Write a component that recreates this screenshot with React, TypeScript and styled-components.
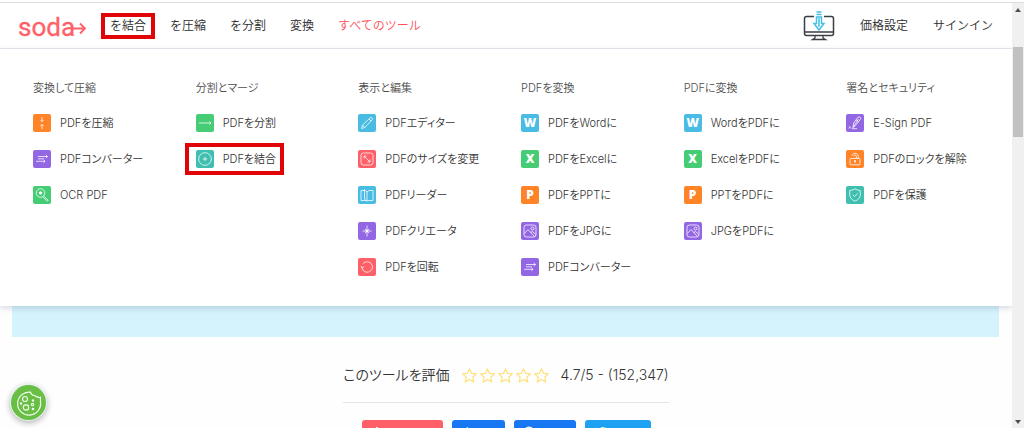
import React from 'react';
import styled, { createGlobalStyle } from 'styled-components';

const GlobalStyle = createGlobalStyle`
  * { box-sizing: border-box; }
  body {
    margin: 0;
    overflow: hidden;
    background: #fefefe;
    color: #333;
    font-family: Inter, "Noto Sans CJK JP", sans-serif;
    font-weight: 350;
  }
  a { color: inherit; text-decoration: none; }
  button { font: inherit; border: 0; padding: 0; cursor: pointer; }
  svg { display: block; }
`;

const Shell = styled.div`
  display: flex;
  height: 100vh;
  margin-top: 2px;
  border-top: 1px solid #dcdddf;
`;

const Page = styled.div`
  flex: 1;
  min-width: 0;
`;

const ScrollTrack = styled.div`
  position: relative;
  z-index: 1;
  display: flex;
  flex-direction: column;
  align-items: center;
  width: 12px;
  height: calc(100vh - 3px);
  padding: 5px 0 4px;
  background: #f0f0f0;
`;

const ScrollThumb = styled.div`
  width: 10px;
  height: 90px;
  margin: 35px 0 auto;
  background: #c1c1c1;
`;

const Header = styled.header`
  display: flex;
  align-items: center;
  justify-content: space-between;
  height: 46px;
  padding: 0 19px 0 18px;
  border-bottom: 1px solid #e6eaf0;
  background: #fff;
`;

const Group = styled.div<{ $gap: number }>`
  display: flex;
  align-items: center;
  gap: ${(p) => p.$gap}px;
`;

const Nav = styled.nav`
  display: flex;
  gap: 24px;
`;

const marker = (y: number, right: number, left: number) => `
  &::after {
    content: "";
    position: absolute;
    inset: -${y}px -${right}px -${y}px -${left}px;
    border: 4px solid #e00408;
  }
`;

const NavLink = styled.a<{ $accent?: boolean; $marked?: boolean }>`
  position: relative;
  font-size: 12px;
  line-height: 18px;
  white-space: nowrap;
  color: ${(p) => (p.$accent ? '#ff5058' : '#2b2b2b')};
  ${(p) => (p.$marked ? marker(4, 9, 9) : '')}
`;

const Menu = styled.section`
  position: relative;
  display: grid;
  grid-template-columns: repeat(6, 1fr);
  padding: 31px 3px 30px 33px;
  background: #fff;
  box-shadow: 0 2px 6px rgba(60, 80, 110, 0.22);
`;

const Heading = styled.h2`
  margin: 0 0 18px;
  font-size: 11px;
  font-weight: 350;
  line-height: 16px;
  color: #4c4c4c;
  font-feature-settings: "palt";
`;

const List = styled.ul`
  display: flex;
  flex-direction: column;
  align-items: flex-start;
  gap: 18px;
  margin: 0;
  padding: 0;
  list-style: none;
`;

const ToolLink = styled.a<{ $marked?: boolean }>`
  position: relative;
  display: flex;
  align-items: center;
  gap: 9px;
  font-size: 11px;
  line-height: 18px;
  white-space: nowrap;
  font-feature-settings: "palt";
  ${(p) => (p.$marked ? marker(7, 8, 11) : '')}
`;

const Tile = styled.span<{ $color: string }>`
  display: flex;
  align-items: center;
  justify-content: center;
  width: 18px;
  height: 18px;
  border-radius: 2px;
  background: ${(p) => p.$color};
  color: #fff;
  font-family: "Open Sans", sans-serif;
  font-size: 12px;
  font-weight: 800;
`;

const Band = styled.div`
  height: 31px;
  margin: 0 13px 0 12px;
  background: #d4f3fd;
`;

const Rating = styled.section`
  display: flex;
  flex-direction: column;
  align-items: center;
  padding-top: 28px;
`;

const RatingRow = styled.div`
  display: flex;
  align-items: center;
  gap: 12px;
  padding-bottom: 17px;
  border-bottom: 1px solid #e4e4e4;
  font-size: 14px;
  line-height: 20px;
  font-feature-settings: "palt";
`;

const StarButton = styled.button`
  background: none;
`;

const ShareRow = styled.div`
  display: flex;
  gap: 9px;
  margin-top: 17px;
`;

const ShareButton = styled.button<{ $color: string; $width: number }>`
  width: ${(p) => p.$width}px;
  height: 24px;
  padding: 5px 9px;
  border-radius: 3px;
  background: ${(p) => p.$color};
`;

const CookieButton = styled.button`
  position: fixed;
  left: 11px;
  bottom: 8px;
  display: flex;
  align-items: center;
  justify-content: center;
  width: 35px;
  height: 35px;
  border-radius: 50%;
  background: #69be45;
  box-shadow: 0 0 0 1px #e6f3f0, 0 2px 6px 1px rgba(0, 0, 0, 0.3);
`;

const glyphs: Record<string, React.ReactNode> = {
  compress: <path d="M9 3v4.500M7.500 6 9 7.600 10.500 6M9 15v-4.500M7.500 12 9 10.400 10.500 12" />,
  convert: <path d="M5 6.500h9.500M12.800 5l1.700 1.500-1.700 1.500M5 8.800h6M3 11.300h9M10.500 9.900l1.600 1.400-1.600 1.400" />,
  ocr: (
    <>
      <circle cx="7.500" cy="7" r="4.300" />
      <circle cx="7.500" cy="7" r="1.300" fill="#fff" />
      <path d="m10.600 10 4.600 4.200-1 1-4.400-4.400" />
    </>
  ),
  split: <path d="M3 9h12M13.500 7.500 15 9l-1.500 1.500" />,
  merge: (
    <>
      <circle cx="9" cy="9" r="6.300" />
      <path d="M9 6.800v4.400M6.800 9h4.400" />
    </>
  ),
  pencil: <path d="m3.500 14.500 1-3.500 7.700-7.200q.9-.8 1.900.1t.1 1.900L6.800 13.500zM11 5l2 2M4.500 11l2.300 2.500" />,
  resize: (
    <>
      <rect x="3" y="3" width="12" height="12" rx="2.500" />
      <path d="m6 6 6 6M6 8.500V6h2.500M12 9.500V12H9.500" />
    </>
  ),
  reader: <path d="M6.500 3.500 9 6v9l-2.500-1.800zM6.500 4.500H3v10h5.500M9 6l2-1.500h4v10h-4L9 15" />,
  creator: (
    <>
      <path d="M9 3.500v11M4.500 9h9M6.800 6.800l4.400 4.400M11.200 6.800l-4.400 4.400" />
      <circle cx="9" cy="9" r="1" fill="#fff" />
    </>
  ),
  rotate: <path d="M4 10a5.300 5.300 0 1 0 1-4.300M3 8l1 2 2-1.200" />,
  image: (
    <>
      <rect x="3" y="3" width="12" height="12" rx="2.500" />
      <circle cx="11.500" cy="6.500" r="1.500" />
      <path d="m3.300 11.500 3.700-4 6.500 7M9.800 10.500l1.800-1 3.200 3" />
    </>
  ),
  sign: <path d="M7 13.500 7.700 9l4-5.500q1.500-1.300 2.600-.2 1 1.200-.3 2.600L9.500 11.500zM7 13.500 12.500 5M10 5.800l2.500 2M2.800 12.500l2 2M4.800 12.500l-2 2M6 14.700h5" />,
  unlock: (
    <>
      <rect x="4" y="8.500" width="10" height="6.300" rx="1" />
      <path d="M6 5.800C6.500 2.200 12 2.500 12.200 6v2.500M7.800 6.200c.4-1.600 2.500-1.500 2.600 0v2.300M9 10.800v2" />
      <circle cx="9" cy="11" r=".6" fill="#fff" />
    </>
  ),
  shield: <path d="M9 2.800q2.500 1.700 5.300 1.700v4.300q-.3 4.300-5.300 6.400-5-2.100-5.300-6.400V4.500Q6.500 4.500 9 2.800zM6.700 8.700l1.800 1.800 3-3" />,
};

const Glyph = ({ name }: { name: string }) =>
  glyphs[name] ? (
    <svg width="18" height="18" viewBox="0 0 18 18" fill="none" stroke="#fff" strokeOpacity="0.85" strokeWidth="0.9" aria-hidden="true">
      {glyphs[name]}
    </svg>
  ) : (
    <>{name}</>
  );

const orange = '#ff8427';
const purple = '#9367e3';
const green = '#46cc74';
const teal = '#40bfb0';
const blue = '#49bce3';
const red = '#ff5f66';

type Tool = [icon: string, color: string, label: string, marked?: boolean];

const columns: { title: string; tools: Tool[] }[] = [
  {
    title: '変換して圧縮',
    tools: [
      ['compress', orange, 'PDFを圧縮'],
      ['convert', purple, 'PDFコンバーター'],
      ['ocr', green, 'OCR PDF'],
    ],
  },
  {
    title: '分割とマージ',
    tools: [
      ['split', green, 'PDFを分割'],
      ['merge', teal, 'PDFを結合', true],
    ],
  },
  {
    title: '表示と編集',
    tools: [
      ['pencil', blue, 'PDFエディター'],
      ['resize', red, 'PDFのサイズを変更'],
      ['reader', blue, 'PDFリーダー'],
      ['creator', purple, 'PDFクリエータ'],
      ['rotate', red, 'PDFを回転'],
    ],
  },
  {
    title: 'PDFを変換',
    tools: [
      ['W', blue, 'PDFをWordに'],
      ['X', green, 'PDFをExcelに'],
      ['P', orange, 'PDFをPPTに'],
      ['image', purple, 'PDFをJPGに'],
      ['convert', purple, 'PDFコンバーター'],
    ],
  },
  {
    title: 'PDFに変換',
    tools: [
      ['W', blue, 'WordをPDFに'],
      ['X', green, 'ExcelをPDFに'],
      ['P', orange, 'PPTをPDFに'],
      ['image', purple, 'JPGをPDFに'],
    ],
  },
  {
    title: '署名とセキュリティ',
    tools: [
      ['sign', purple, 'E-Sign PDF'],
      ['unlock', orange, 'PDFのロックを解除'],
      ['shield', teal, 'PDFを保護'],
    ],
  },
];

const Logo = () => (
  <svg width="68" height="36" viewBox="0 0 68 36" fill="none">
    <text x="0" y="28" fill={red} stroke={red} strokeWidth="0.3" fontFamily="Roboto, sans-serif" fontSize="26" fontWeight="400">
      soda
    </text>
    <path d="M53 20.500h14M62 15.500l5 5-5 5" stroke={red} strokeWidth="1.800" />
  </svg>
);

const DesktopIcon = () => (
  <svg width="32" height="30" viewBox="0 0 32 30" fill="none">
    <path d="M11 5.500H3.500Q1.500 5.500 1.500 7.500v15q0 2 2 2h25q2 0 2-2v-15q0-2-2-2H21M1.500 21h29" stroke="#3a3f45" strokeWidth="1.500" />
    <path d="M12 25v2L9.500 28.500h13L20 27v-2" stroke="#3a3f45" strokeWidth="1.300" />
    <path d="M13.500 1h5M13.500 3.500h5M13.500 6v6.500H11l5 6.500 5-6.500h-2.500V6zM16 7v9" stroke="#45bfe6" strokeWidth="1.500" />
  </svg>
);

const Star = () => (
  <svg width="15" height="15" viewBox="0 0 15 15" fill="none" stroke="#ffe07a" strokeWidth="1.200" strokeLinejoin="round">
    <path d="m7.500.9 2 4.400 4.900.6-3.600 3.300.9 4.900-4.200-2.500-4.200 2.500.9-4.900L.6 5.900l4.900-.6z" />
  </svg>
);

const CookieIcon = () => (
  <svg width="26" height="26" viewBox="0 0 26 26" fill="none" stroke="#f0fbea" strokeWidth="1.200">
    <path d="M14.500 2.200A11.500 11.500 0 1 0 24.500 12V7.200q-1.500.8-2.800-.4-2 .7-3-1.300-3.300.3-4.200-3.300z" />
    <circle cx="9" cy="9" r="2.500" />
    <circle cx="10" cy="17.500" r="2.700" />
    <circle cx="16.500" cy="14.500" r="1.200" />
    <g fill="#f0fbea" stroke="none">
      <circle cx="5" cy="13.500" r="1.200" />
      <circle cx="17" cy="10.500" r="1.200" />
      <circle cx="17" cy="19" r="1.300" />
    </g>
  </svg>
);

const ShareIcon = ({ children }: { children: React.ReactNode }) => (
  <svg width="12" height="12" viewBox="0 0 12 12" fill="#fff">
    {children}
  </svg>
);

export default function App() {
  return (
    <>
      <GlobalStyle />
      <Shell>
        <Page>
          <Header>
            <Group $gap={24}>
              <a href="#" aria-label="soda"><Logo /></a>
              <Nav>
                <NavLink href="#" $marked>を結合</NavLink>
                <NavLink href="#">を圧縮</NavLink>
                <NavLink href="#">を分割</NavLink>
                <NavLink href="#">変換</NavLink>
                <NavLink href="#" $accent>すべてのツール</NavLink>
              </Nav>
            </Group>
            <Group $gap={25}>
              <a href="#" aria-label="デスクトップ"><DesktopIcon /></a>
              <NavLink href="#">価格設定</NavLink>
              <NavLink href="#">サインイン</NavLink>
            </Group>
          </Header>
          <Menu>
            {columns.map((column) => (
              <div key={column.title}>
                <Heading>{column.title}</Heading>
                <List>
                  {column.tools.map(([icon, color, label, marked]) => (
                    <li key={label}>
                      <ToolLink href="#" $marked={marked}>
                        <Tile $color={color} aria-hidden="true"><Glyph name={icon} /></Tile>
                        {label}
                      </ToolLink>
                    </li>
                  ))}
                </List>
              </div>
            ))}
          </Menu>
          <Band />
          <Rating>
            <RatingRow>
              <span>このツールを評価</span>
              <Group $gap={3}>
                {[1, 2, 3, 4, 5].map((n) => (
                  <StarButton key={n} type="button" aria-label={`${n}`}><Star /></StarButton>
                ))}
              </Group>
              <span>4.7/5 - (152,347)</span>
            </RatingRow>
            <ShareRow>
              <ShareButton type="button" $color={red} $width={81} aria-label="AddThis">
                <ShareIcon><path d="M5 1h2v4h4v2H7v4H5V7H1V5h4z" /></ShareIcon>
              </ShareButton>
              <ShareButton type="button" $color="#1877f2" $width={53} aria-label="Like">
                <ShareIcon><path d="M1 5h2v6H1zM4 5l2-4q2 0 1 4h4l-1 6H4z" /></ShareIcon>
              </ShareButton>
              <ShareButton type="button" $color="#1877f2" $width={62} aria-label="Facebook">
                <ShareIcon><circle cx="6" cy="6" r="5.500" /></ShareIcon>
              </ShareButton>
              <ShareButton type="button" $color="#1da1f2" $width={66} aria-label="Twitter">
                <ShareIcon><path d="M1 1.500Q3 4 6 4 5.800 1 8.500 1q1 0 1.700.7L12 1.300 11 3.500Q11 11 4 11 2 11 0 10q2 0 3.500-1L1 6.500Q0 4 1 1.500z" /></ShareIcon>
              </ShareButton>
            </ShareRow>
          </Rating>
        </Page>
        <ScrollTrack aria-hidden="true">
          <svg width="6" height="4" viewBox="0 0 6 4" fill="#505050"><path d="M3 0l3 4H0z" /></svg>
          <ScrollThumb />
          <svg width="6" height="4" viewBox="0 0 6 4" fill="#505050"><path d="M3 4 0 0h6z" /></svg>
        </ScrollTrack>
      </Shell>
      <CookieButton type="button" aria-label="Cookie"><CookieIcon /></CookieButton>
    </>
  );
}
